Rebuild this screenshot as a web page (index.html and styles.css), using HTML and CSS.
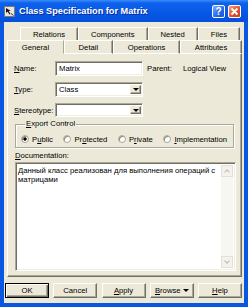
FILE: index.html
```html
<!DOCTYPE html>
<html lang="en">
<head>
<meta charset="utf-8">
<title>Class Specification for Matrix</title>
<link rel="stylesheet" href="styles.css">
</head>
<body>
<div class="window">
	<div class="titlebar">
		<svg class="app-icon" width="11" height="11" viewBox="0 0 11 11">
			<rect x="0.5" y="0.5" width="10" height="10" fill="#E8E6DE" stroke="#7A7A7A"/>
			<path d="M2 2 L2 7 L3.5 5.5 L5.5 8.5 L6.5 8 L4.6 5 L6.8 5 Z" fill="#111"/>
			<path d="M7 7.5 L9.5 9.5" stroke="#333" stroke-width="1"/>
		</svg>
		<span class="title">Class Specification for Matrix</span>
		<span class="cap-btn help">?</span>
		<span class="cap-btn close">
			<svg width="9" height="9" viewBox="0 0 9 9"><path d="M1.5 1.5 L7.5 7.5 M7.5 1.5 L1.5 7.5" stroke="#fff" stroke-width="1.8"/></svg>
		</span>
	</div>
	<div class="client">
		<ul class="tab-row back">
			<li>Relations</li>
			<li>Components</li>
			<li>Nested</li>
			<li>Files</li>
		</ul>
		<ul class="tab-row front">
			<li class="active">General</li>
			<li>Detail</li>
			<li>Operations</li>
			<li>Attributes</li>
		</ul>
		<div class="panel">
			<div class="row">
				<span class="lbl"><u>N</u>ame:</span>
				<span class="edit">Matrix</span>
				<span class="parent-lbl">Parent:</span>
				<span>Logical View</span>
			</div>
			<div class="row">
				<span class="lbl"><u>T</u>ype:</span>
				<span class="edit combo"><span class="val">Class</span><span class="drop"></span></span>
			</div>
			<div class="row short">
				<span class="lbl"><u>S</u>tereotype:</span>
				<span class="edit combo"><span class="val"></span><span class="drop"></span></span>
			</div>
			<fieldset class="group">
				<legend><u>E</u>xport Control</legend>
				<div class="radios">
					<span class="radio-item"><span class="radio checked"></span>P<u>u</u>blic</span>
					<span class="radio-item"><span class="radio"></span>Pr<u>o</u>tected</span>
					<span class="radio-item"><span class="radio"></span>P<u>r</u>ivate</span>
					<span class="radio-item"><span class="radio"></span><u>I</u>mplementation</span>
				</div>
			</fieldset>
			<div class="doc-lbl"><u>D</u>ocumentation:</div>
			<div class="memo">
				<div class="memo-text">Данный класс реализован для выполнения операций с матрицами</div>
				<div class="vscroll">
					<span class="sb-btn up"></span>
					<span class="sb-track"></span>
					<span class="sb-btn down"></span>
				</div>
			</div>
		</div>
		<div class="buttons">
			<span class="btn default">OK</span>
			<span class="btn">Cancel</span>
			<span class="btn"><u>A</u>pply</span>
			<span class="btn"><u>B</u>rowse <span class="caret"></span></span>
			<span class="btn"><u>H</u>elp</span>
		</div>
	</div>
</div>
</body>
</html>
```

FILE: styles.css
```css
html, body { margin: 0; padding: 0; }
body { font-family: "Liberation Sans", Arial, sans-serif; font-size: 7.7px; color: #000; }

.window {
    width: 248px; height: 307px;
    box-sizing: border-box;
    background: #0A58E2;
    padding: 0 4px 4px 4px;
    display: flex; flex-direction: column;
}

/* caption */
.titlebar {
    height: 22px;
    margin: 0 -4px;
    padding: 0 7px 0 4px;
    display: flex; align-items: center;
    background: linear-gradient(#3A8CFA 0, #0D62EC 3px, #0758E6 55%, #0550DC 100%);
}
.app-icon { margin-right: 4px; margin-top: 1px; }
.title {
    flex: 1;
    color: #fff;
    font-weight: bold;
    font-size: 9.2px;
    text-shadow: 1px 1px #0A2A9A;
}
.cap-btn {
    width: 13px; height: 13px;
    box-sizing: border-box;
    border: 1px solid #fff;
    border-radius: 2px;
    display: flex; align-items: center; justify-content: center;
    color: #fff; font-weight: bold; font-size: 10px;
    margin-left: 3px;
}
.help { background: linear-gradient(135deg, #7CB1FF, #2668E8 60%, #1A55D8); }
.close { background: linear-gradient(135deg, #F4A189, #E1532E 55%, #C73E1B); }

.client {
    flex: 1;
    background: #ECE9D8;
    display: flex; flex-direction: column;
    padding: 5px 2px 5px 3px;
}

/* tabs */
.tab-row {
    list-style: none; margin: 0; padding: 0;
    display: flex;
}
.tab-row li {
    flex: auto;
    text-align: center;
    border-top: 1px solid #fff;
    border-left: 1px solid #fff;
    border-right: 1px solid #716F64;
    box-shadow: inset -1px 0 #ACA899;
}
.tab-row.back { margin: 0 2px 0 13px; height: 13px; line-height: 12px; }
.tab-row.back li { padding-top: 1px; }
.tab-row.front { margin-right: 0; height: 14px; line-height: 13px; }
.tab-row.front li { border-bottom: 1px solid #fff; }
.tab-row.front li.active { border-bottom-color: #ECE9D8; border-right-color: #ACA899; box-shadow: none; }

/* page */
.panel {
    flex: 1;
    border: 1px solid;
    border-color: transparent #716F64 #716F64 #fff;
    border-top: 0;
    box-shadow: inset -1px -1px #ACA899;
    padding: 7px 6px 5px 6px;
    display: flex; flex-direction: column;
}
.row { display: flex; align-items: center; height: 15px; margin-bottom: 6px; }
.row.short { height: 14px; margin-bottom: 2px; }
.lbl { width: 41px; }
.edit {
    width: 88px; height: 100%;
    box-sizing: border-box;
    background: #fff;
    border: 1px solid;
    border-color: #ACA899 #fff #fff #ACA899;
    box-shadow: inset 1px 1px #716F64, inset -1px -1px #F1EFE2;
    padding: 0 3px;
    display: flex; align-items: center;
}
.parent-lbl { margin-left: 4px; width: 36px; }
.combo { padding: 2px 1px 2px 3px; }
.combo .val { flex: 1; }
.drop {
    width: 11px; height: 100%;
    box-sizing: border-box;
    background: #ECE9D8;
    border: 1px solid;
    border-color: #F1EFE2 #716F64 #716F64 #F1EFE2;
    box-shadow: inset -1px -1px #ACA899;
    display: flex; align-items: center; justify-content: center;
}
.drop::before, .caret {
    content: "";
    border-left: 3px solid transparent;
    border-right: 3px solid transparent;
    border-top: 3px solid #000;
}
.caret { display: inline-block; vertical-align: middle; margin-left: 2px; }

.group {
    margin: 0 1px;
    padding: 5px 6px 3px 5px;
    border: 1px solid #ACA899;
    box-shadow: inset 1px 1px #fff, 1px 1px #fff;
    min-width: 0;
}
.group legend { padding: 0 1px; margin-left: 4px; line-height: 10px; }
.radios { display: flex; justify-content: space-between; height: 10px; align-items: center; }
.radio-item { display: flex; align-items: center; }
.radio {
    width: 8px; height: 8px;
    box-sizing: border-box;
    border-radius: 50%;
    border: 1px solid #ACA899;
    background: #fff;
    box-shadow: inset 1px 1px #8A887C;
    margin-right: 3px;
}
.radio.checked { background: radial-gradient(circle, #000 0 1.4px, #fff 1.9px); }

.doc-lbl { margin: 3px 0 1px 1px; line-height: 10px; }
.memo {
    flex: 1;
    margin: 0 -1px 0 1px;
    background: #fff;
    border: 1px solid;
    border-color: #ACA899 #fff #fff #ACA899;
    box-shadow: inset 1px 1px #716F64, inset -1px -1px #F1EFE2;
    padding: 2px;
    display: flex;
}
.memo-text { flex: 1; padding: 1px 0 0 0; line-height: 9px; }
.vscroll { width: 12px; display: flex; flex-direction: column; background: #F7F6F1; }
.sb-track { flex: 1; }
.sb-btn {
    height: 12px;
    box-sizing: border-box;
    background: #F3F2EC;
    border: 1px solid #E3E1D6;
    display: flex; align-items: center; justify-content: center;
}
.sb-btn::before {
    content: "";
    width: 3px; height: 3px;
    border-left: 1px solid #BDBBB0;
    border-top: 1px solid #BDBBB0;
}
.sb-btn.up::before { transform: rotate(45deg); margin-top: 2px; }
.sb-btn.down::before { transform: rotate(-135deg); margin-top: -2px; }

/* bottom buttons */
.buttons {
    display: flex; justify-content: space-between;
    margin: 6px 0 0 -2px;
    height: 15px;
}
.btn {
    width: 44px;
    box-sizing: border-box;
    background: #ECE9D8;
    border: 1px solid;
    border-color: #fff #716F64 #716F64 #fff;
    box-shadow: inset -1px -1px #ACA899;
    display: flex; align-items: center; justify-content: center;
}
.btn.default { border-color: #000; box-shadow: inset 1px 1px #fff, inset -1px -1px #716F64, inset -2px -2px #ACA899; }
```
